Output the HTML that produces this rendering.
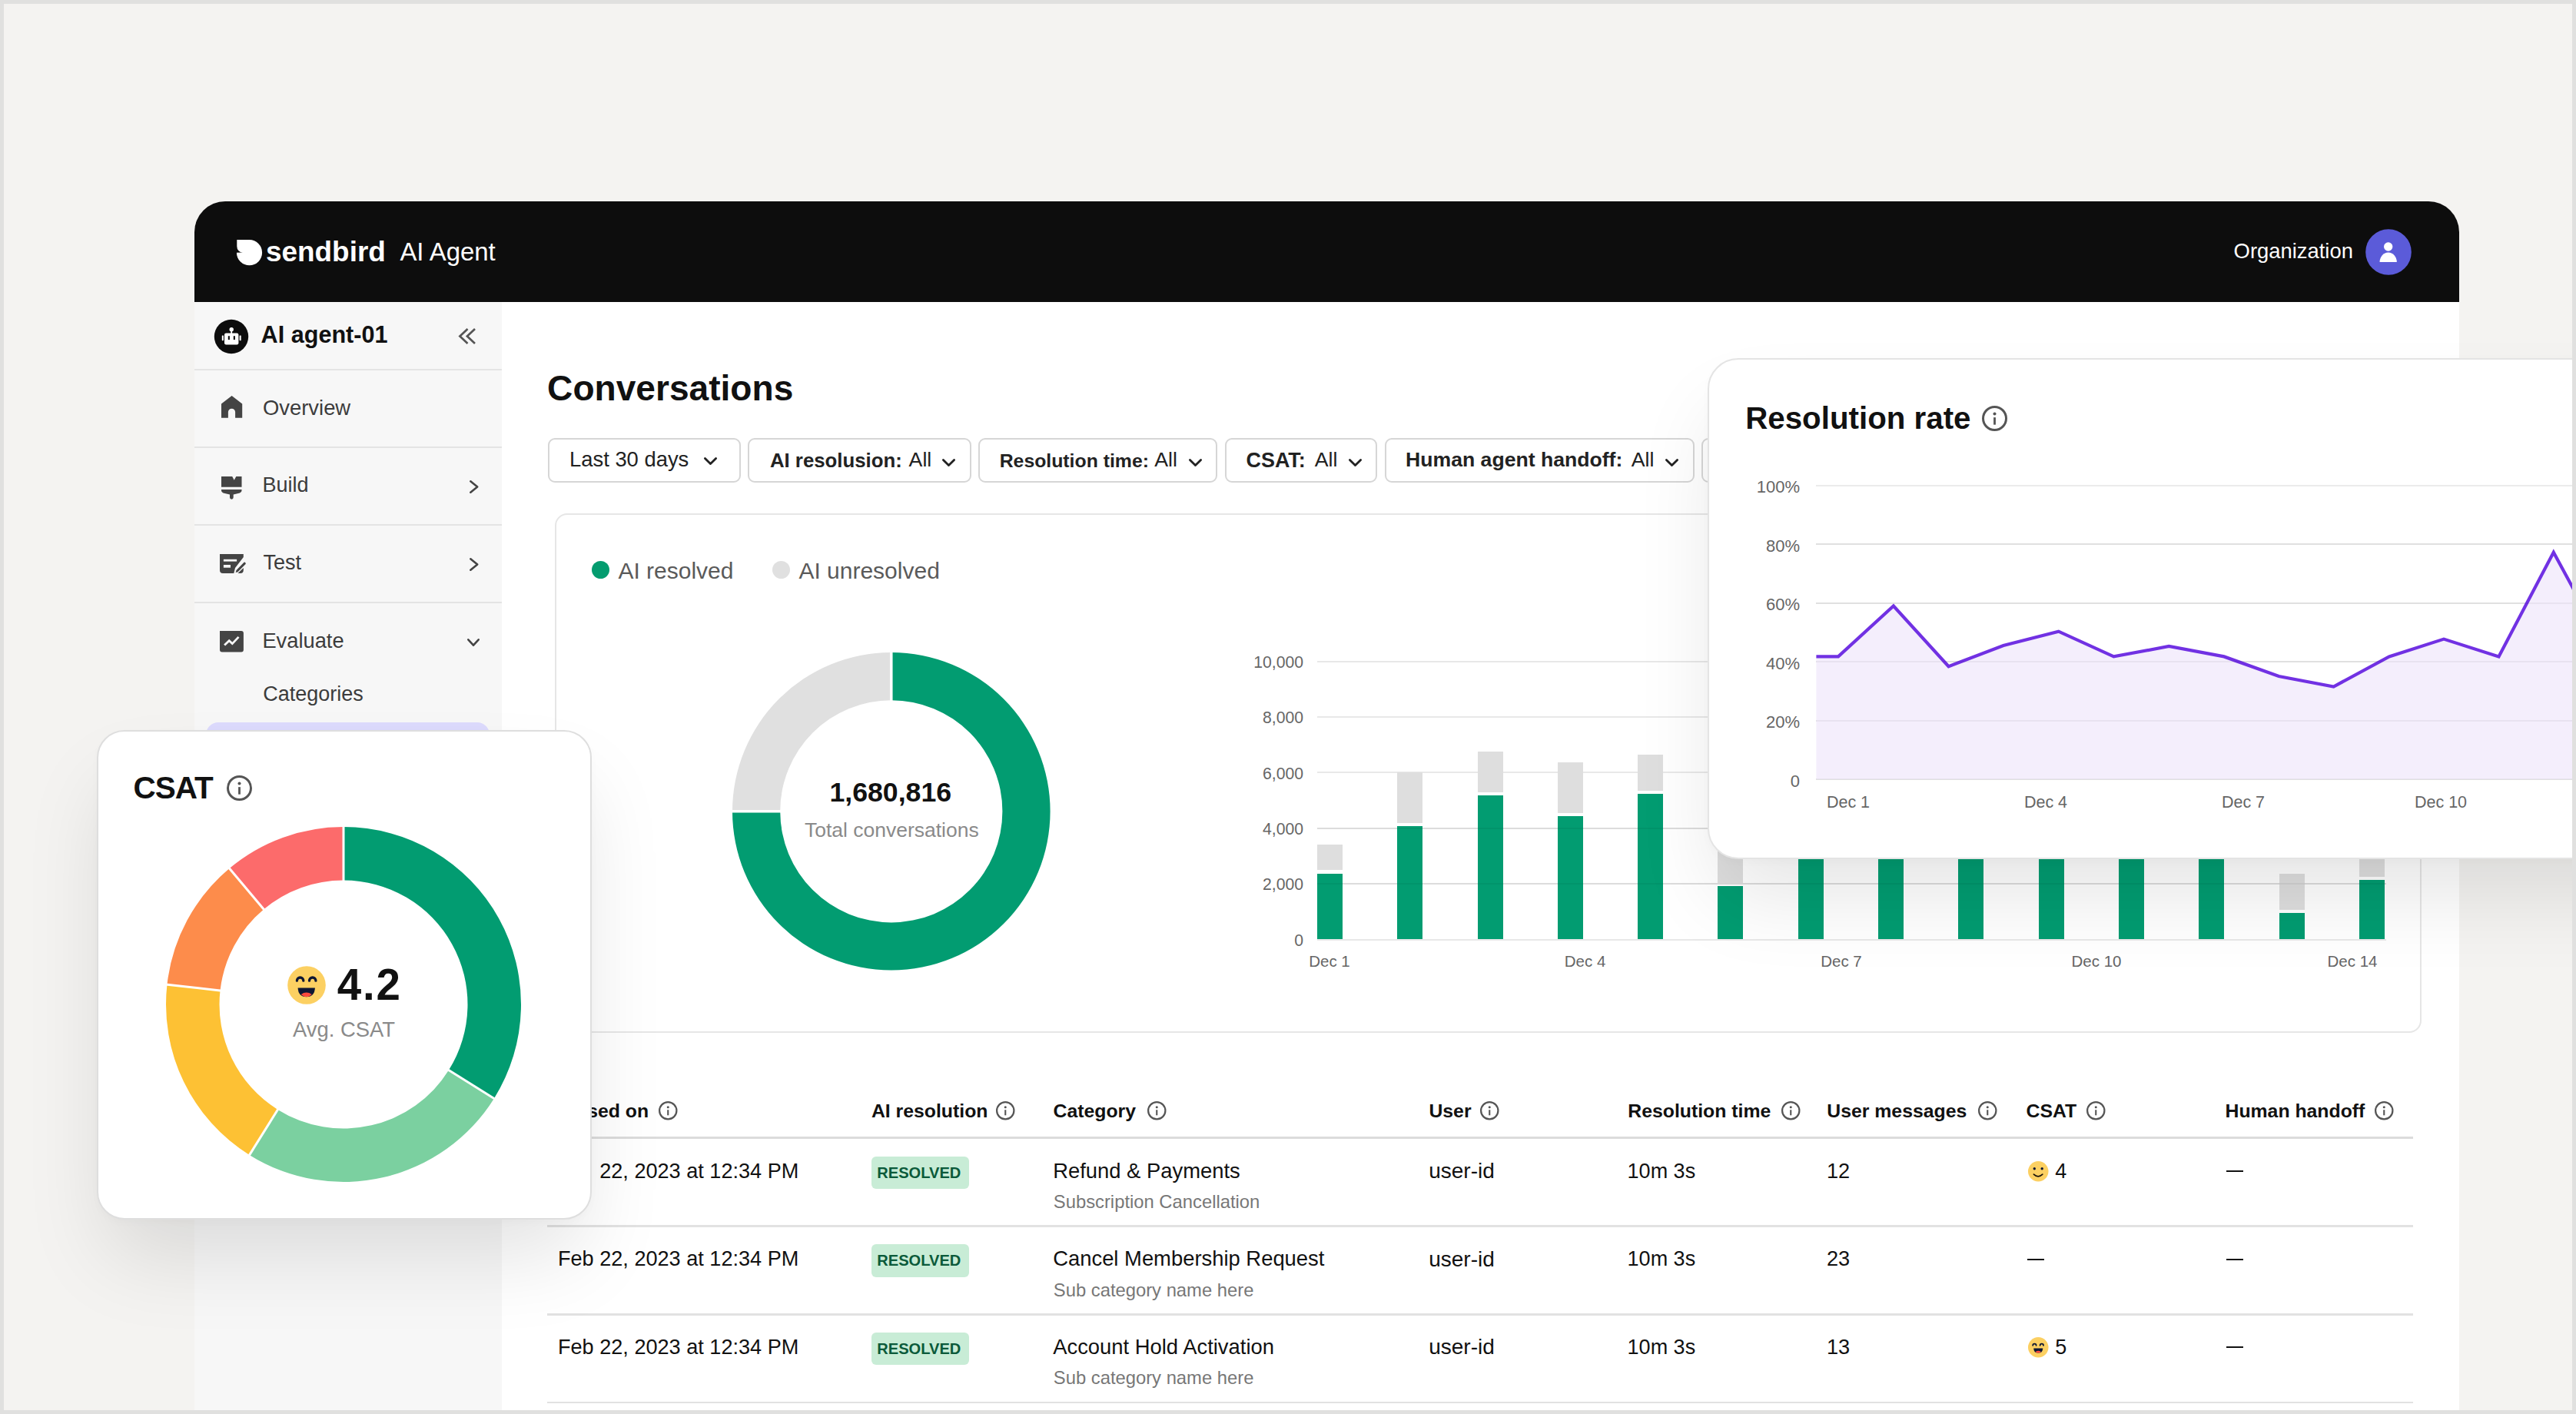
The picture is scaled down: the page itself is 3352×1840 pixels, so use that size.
<!DOCTYPE html><html><head><meta charset="utf-8"><style>
html,body{margin:0;padding:0}
body{width:3352px;height:1840px;overflow:hidden;position:relative;background:#f4f3f1;font-family:"Liberation Sans", sans-serif}
.t{position:absolute;white-space:nowrap}
svg{overflow:visible}
</style></head><body>
<div style="position:absolute;left:253.0px;top:393.0px;width:2947.0px;height:1447.0px;background:#fff"></div>
<div style="position:absolute;left:253.0px;top:262.0px;width:2947.0px;height:131.0px;background:#0d0d0d;border-radius:40px 40px 0 0"></div>
<div style="position:absolute;left:253.0px;top:393.0px;width:400.0px;height:1447.0px;background:#f7f7f7"></div>
<div style="position:absolute;left:253.0px;top:480.0px;width:400.0px;height:2.0px;background:#e4e4e4"></div>
<div style="position:absolute;left:253.0px;top:581.0px;width:400.0px;height:2.0px;background:#e4e4e4"></div>
<div style="position:absolute;left:253.0px;top:682.0px;width:400.0px;height:2.0px;background:#e4e4e4"></div>
<div style="position:absolute;left:253.0px;top:783.0px;width:400.0px;height:2.0px;background:#e4e4e4"></div>
<svg style="position:absolute;left:300.0px;top:300.0px;" width="60" height="60" viewBox="0 0 60 60"><path d="M8.3,12.1 H24.5 A16.6,16.6 0 1 1 7.9,28.8 L15.8,28.6 A7.6,7.9 0 0 1 8.3,20.6 Z" fill="#fff"/></svg>
<div class="t" style="left:346.0px;top:307.1px;font-size:36.9px;line-height:41.22px;font-weight:700;color:#fff;">sendbird</div>
<div class="t" style="left:520.4px;top:310.4px;font-size:32.9px;line-height:36.75px;font-weight:400;color:#fff;">AI Agent</div>
<div class="t" style="left:2906.6px;top:312.2px;font-size:27.4px;line-height:30.61px;font-weight:400;color:#fff;">Organization</div>
<svg style="position:absolute;left:3078.2px;top:298.0px;" width="60" height="60" viewBox="0 0 60 60"><circle cx="30" cy="30" r="29.8" fill="#5b5bd9"/><circle cx="29.7" cy="23" r="5.7" fill="#fff"/><path d="M18.6,42.9 A11.1,12.4 0 0 1 40.8,42.9 Z" fill="#fff"/></svg>
<svg style="position:absolute;left:279.4px;top:415.5px;" width="44" height="44" viewBox="0 0 44 44"><circle cx="22" cy="22" r="22.2" fill="#0d0d0d"/><rect x="13" y="17.4" width="18.4" height="15.1" rx="2.2" fill="#fff"/><rect x="17.8" y="21.2" width="2.1" height="4.9" fill="#0d0d0d"/><rect x="24.8" y="21.2" width="2.1" height="4.9" fill="#0d0d0d"/><rect x="9.8" y="20.4" width="2.1" height="6.8" rx="0.6" fill="#fff"/><rect x="32.6" y="20.4" width="2.1" height="6.8" rx="0.6" fill="#fff"/><circle cx="22.2" cy="12.7" r="2.7" fill="#fff"/><rect x="21.3" y="13" width="1.8" height="5" fill="#fff"/></svg>
<div class="t" style="left:339.6px;top:418.3px;font-size:30.6px;line-height:34.18px;font-weight:700;color:#111;">AI agent-01</div>
<svg style="position:absolute;left:597.0px;top:428.0px;" width="22" height="20" viewBox="0 0 22 20"><polyline points="10.5,1 1.4,9.5 10.5,18" fill="none" stroke="#555" stroke-width="2.7" stroke-linecap="square"/><polyline points="20,1 10.9,9.5 20,18" fill="none" stroke="#555" stroke-width="2.7" stroke-linecap="square"/></svg>
<svg style="position:absolute;left:287.9px;top:515.0px;" width="28" height="29" viewBox="0 0 28 29"><path d="M0,10.4 L13.6,0 L27.2,10.4 V28.8 H18.1 V21.3 A4.6,4.6 0 0 0 8.9,21.3 V28.8 H0 Z" fill="#444"/></svg>
<div class="t" style="left:342.0px;top:516.4px;font-size:27.4px;line-height:30.61px;font-weight:400;color:#3c3c3c;">Overview</div>
<svg style="position:absolute;left:288.2px;top:619.8px;" width="27" height="29" viewBox="0 0 27 29"><path d="M0,0 H14.2 L16.7,4.7 L19.3,0 H26.5 V13.7 H0 Z" fill="#444"/><path d="M0,17 H26.5 V18 Q26.5,21 22,22 L15.7,23.6 V27.3 A2.35,2.35 0 0 1 11,27.3 V23.6 L4.5,22 Q0,21 0,18 Z" fill="#444"/></svg>
<div class="t" style="left:341.4px;top:616.4px;font-size:27px;line-height:30.16px;font-weight:400;color:#3c3c3c;">Build</div>
<svg style="position:absolute;left:610.5px;top:624.5px;" width="11.5" height="17" viewBox="0 0 11.5 17"><polyline points="1.3,1.3 10.2,8.5 1.3,15.7" fill="none" stroke="#444" stroke-width="2.6" stroke-linecap="round" stroke-linejoin="round"/></svg>
<svg style="position:absolute;left:286.0px;top:721.3px;" width="34" height="26" viewBox="0 0 34 26"><path d="M0,0 H30.8 V4 L20,18 L18.3,25.1 H4 A4,4 0 0 1 0,21.1 Z" fill="#444"/><rect x="4.9" y="6.8" width="17.2" height="2.8" fill="#f7f7f7"/><rect x="4.9" y="14" width="9.1" height="3.7" fill="#f7f7f7"/><path d="M21.5,21 L31.5,10.8 A1.6,1.6 0 0 1 33.6,13 L23.5,23.2 L20.6,24 Z" fill="#444"/><path d="M30.8,18 V21.1 A4,4 0 0 1 26.8,25.1 H23.5 Z" fill="#444"/></svg>
<div class="t" style="left:342.4px;top:717.3px;font-size:27px;line-height:30.16px;font-weight:400;color:#3c3c3c;">Test</div>
<svg style="position:absolute;left:610.5px;top:725.5px;" width="11.5" height="17" viewBox="0 0 11.5 17"><polyline points="1.3,1.3 10.2,8.5 1.3,15.7" fill="none" stroke="#444" stroke-width="2.6" stroke-linecap="round" stroke-linejoin="round"/></svg>
<svg style="position:absolute;left:286.1px;top:821.1px;" width="31" height="28" viewBox="0 0 31 28"><path d="M0,0 H27.9 A3,3 0 0 1 30.9,3 V24.6 A3,3 0 0 1 27.9,27.6 H3 A3,3 0 0 1 0,24.6 Z" fill="#444"/><polyline points="6.1,18.5 12.2,12.7 16.3,16.6 24.5,7.9" fill="none" stroke="#f7f7f7" stroke-width="2.8"/></svg>
<div class="t" style="left:341.4px;top:818.6px;font-size:27.3px;line-height:30.49px;font-weight:400;color:#3c3c3c;">Evaluate</div>
<svg style="position:absolute;left:608.0px;top:830.6px;" width="16" height="10" viewBox="0 0 16 10"><polyline points="1.3,1.3 8.0,8.7 14.7,1.3" fill="none" stroke="#444" stroke-width="2.6" stroke-linecap="round" stroke-linejoin="round"/></svg>
<div class="t" style="left:342.2px;top:888.2px;font-size:27.0px;line-height:30.16px;font-weight:400;color:#3c3c3c;">Categories</div>
<div style="position:absolute;left:268.3px;top:940.0px;width:369.2px;height:80.0px;background:#dcdafd;border-radius:16px"></div>
<div class="t" style="left:712.1px;top:479.8px;font-size:46.1px;line-height:51.49px;font-weight:700;color:#111;">Conversations</div>
<div style="position:absolute;left:713.0px;top:570.4px;width:251.0px;height:57.6px;box-sizing:border-box;border:2px solid #d6d6d6;border-radius:9px;background:#fff"></div>
<div style="position:absolute;left:972.8px;top:570.4px;width:291.2px;height:57.6px;box-sizing:border-box;border:2px solid #d6d6d6;border-radius:9px;background:#fff"></div>
<div style="position:absolute;left:1273.3px;top:570.4px;width:310.6px;height:57.6px;box-sizing:border-box;border:2px solid #d6d6d6;border-radius:9px;background:#fff"></div>
<div style="position:absolute;left:1593.6px;top:570.4px;width:198.7px;height:57.6px;box-sizing:border-box;border:2px solid #d6d6d6;border-radius:9px;background:#fff"></div>
<div style="position:absolute;left:1801.6px;top:570.4px;width:403.0px;height:57.6px;box-sizing:border-box;border:2px solid #d6d6d6;border-radius:9px;background:#fff"></div>
<div style="position:absolute;left:2214.0px;top:570.4px;width:186.0px;height:57.6px;box-sizing:border-box;border:2px solid #d6d6d6;border-radius:9px;background:#fff"></div>
<div class="t" style="left:741.0px;top:583.2px;font-size:27.4px;line-height:30.61px;font-weight:400;color:#222;">Last 30 days</div>
<svg style="position:absolute;left:916.0px;top:595.0px;" width="17" height="10" viewBox="0 0 17 10"><polyline points="1.4,1.4 8.5,8.6 15.6,1.4" fill="none" stroke="#222" stroke-width="2.8" stroke-linecap="round" stroke-linejoin="round"/></svg>
<div class="t" style="left:1001.9px;top:584.7px;font-size:25.8px;line-height:28.82px;font-weight:700;color:#222;">AI resolusion:</div>
<div class="t" style="left:1182.6px;top:583.8px;font-size:26.7px;line-height:29.82px;font-weight:400;color:#222;">All</div>
<svg style="position:absolute;left:1226.0px;top:597.0px;" width="17" height="10" viewBox="0 0 17 10"><polyline points="1.4,1.4 8.5,8.6 15.6,1.4" fill="none" stroke="#222" stroke-width="2.8" stroke-linecap="round" stroke-linejoin="round"/></svg>
<div class="t" style="left:1300.7px;top:585.6px;font-size:24.8px;line-height:27.70px;font-weight:700;color:#222;">Resolution time:</div>
<div class="t" style="left:1502.3px;top:583.8px;font-size:26.7px;line-height:29.82px;font-weight:400;color:#222;">All</div>
<svg style="position:absolute;left:1547.0px;top:597.0px;" width="17" height="10" viewBox="0 0 17 10"><polyline points="1.4,1.4 8.5,8.6 15.6,1.4" fill="none" stroke="#222" stroke-width="2.8" stroke-linecap="round" stroke-linejoin="round"/></svg>
<div class="t" style="left:1621.6px;top:583.7px;font-size:26.9px;line-height:30.05px;font-weight:700;color:#222;">CSAT:</div>
<div class="t" style="left:1710.8px;top:583.8px;font-size:26.7px;line-height:29.82px;font-weight:400;color:#222;">All</div>
<svg style="position:absolute;left:1754.7px;top:597.0px;" width="17" height="10" viewBox="0 0 17 10"><polyline points="1.4,1.4 8.5,8.6 15.6,1.4" fill="none" stroke="#222" stroke-width="2.8" stroke-linecap="round" stroke-linejoin="round"/></svg>
<div class="t" style="left:1829.1px;top:583.9px;font-size:26.6px;line-height:29.71px;font-weight:700;color:#222;">Human agent handoff:</div>
<div class="t" style="left:2122.7px;top:583.8px;font-size:26.7px;line-height:29.82px;font-weight:400;color:#222;">All</div>
<svg style="position:absolute;left:2167.0px;top:597.0px;" width="17" height="10" viewBox="0 0 17 10"><polyline points="1.4,1.4 8.5,8.6 15.6,1.4" fill="none" stroke="#222" stroke-width="2.8" stroke-linecap="round" stroke-linejoin="round"/></svg>
<div style="position:absolute;left:722.0px;top:668.0px;width:2429.0px;height:676.0px;box-sizing:border-box;border:2px solid #e6e6e6;border-radius:16px;background:#fff"></div>
<div style="position:absolute;left:770.3px;top:730.4px;width:23.0px;height:23.0px;background:#049c6f;border-radius:50%"></div>
<div class="t" style="left:804.4px;top:725.9px;font-size:30.0px;line-height:33.51px;font-weight:400;color:#5a5a5a;">AI resolved</div>
<div style="position:absolute;left:1005.0px;top:730.4px;width:23.0px;height:23.0px;background:#e0e0e0;border-radius:50%"></div>
<div class="t" style="left:1039.4px;top:725.9px;font-size:30.0px;line-height:33.51px;font-weight:400;color:#5a5a5a;">AI unresolved</div>
<svg style="position:absolute;left:948.5px;top:845.0px;" width="421.6" height="421.6" viewBox="0 0 421.6 421.6"><path d="M210.80,4.00 A206.8,206.8 0 1 1 4.00,210.80 L66.20,210.80 A144.6,144.6 0 1 0 210.80,66.20 Z" fill="#029c71"/><path d="M4.00,210.80 A206.8,206.8 0 0 1 210.80,4.00 L210.80,66.20 A144.6,144.6 0 0 0 66.20,210.80 Z" fill="#e0e0e0"/><line x1="210.80" y1="68.20" x2="210.80" y2="2.00" stroke="#fff" stroke-width="3.5"/><line x1="68.20" y1="210.80" x2="2.00" y2="210.80" stroke="#fff" stroke-width="3.5"/></svg>
<div class="t" style="left:1079.4px;top:1011.7px;font-size:35.7px;line-height:39.88px;font-weight:700;color:#111;">1,680,816</div>
<div class="t" style="left:1046.9px;top:1066.0px;font-size:26.5px;line-height:29.60px;font-weight:400;color:#8a8a8a;">Total conversations</div>
<div style="position:absolute;left:1714.0px;top:859.7px;width:1391.0px;height:2.0px;background:#e8e8e8"></div>
<div class="t" style="left:1696.0px;top:849.8px;font-size:21.2px;line-height:23.68px;font-weight:400;color:#666;transform:translateX(-100%);">10,000</div>
<div style="position:absolute;left:1714.0px;top:932.1px;width:1391.0px;height:2.0px;background:#e8e8e8"></div>
<div class="t" style="left:1696.0px;top:922.2px;font-size:21.2px;line-height:23.68px;font-weight:400;color:#666;transform:translateX(-100%);">8,000</div>
<div style="position:absolute;left:1714.0px;top:1004.4px;width:1391.0px;height:2.0px;background:#e8e8e8"></div>
<div class="t" style="left:1696.0px;top:994.5px;font-size:21.2px;line-height:23.68px;font-weight:400;color:#666;transform:translateX(-100%);">6,000</div>
<div style="position:absolute;left:1714.0px;top:1076.8px;width:1391.0px;height:2.0px;background:#e8e8e8"></div>
<div class="t" style="left:1696.0px;top:1066.9px;font-size:21.2px;line-height:23.68px;font-weight:400;color:#666;transform:translateX(-100%);">4,000</div>
<div style="position:absolute;left:1714.0px;top:1149.1px;width:1391.0px;height:2.0px;background:#e8e8e8"></div>
<div class="t" style="left:1696.0px;top:1139.2px;font-size:21.2px;line-height:23.68px;font-weight:400;color:#666;transform:translateX(-100%);">2,000</div>
<div style="position:absolute;left:1714.0px;top:1221.5px;width:1391.0px;height:2.0px;background:#e8e8e8"></div>
<div class="t" style="left:1696.0px;top:1211.6px;font-size:21.2px;line-height:23.68px;font-weight:400;color:#666;transform:translateX(-100%);">0</div>
<div style="position:absolute;left:1713.9px;top:1099.4px;width:33.0px;height:33.1px;background:#dedede"></div>
<div style="position:absolute;left:1713.9px;top:1136.5px;width:33.0px;height:85.9px;background:#029c71"></div>
<div style="position:absolute;left:1818.2px;top:1004.5px;width:33.0px;height:66.2px;background:#dedede"></div>
<div style="position:absolute;left:1818.2px;top:1074.7px;width:33.0px;height:147.7px;background:#029c71"></div>
<div style="position:absolute;left:1922.5px;top:977.8px;width:33.0px;height:53.6px;background:#dedede"></div>
<div style="position:absolute;left:1922.5px;top:1035.4px;width:33.0px;height:187.0px;background:#029c71"></div>
<div style="position:absolute;left:2026.8px;top:992.0px;width:33.0px;height:66.0px;background:#dedede"></div>
<div style="position:absolute;left:2026.8px;top:1062.0px;width:33.0px;height:160.4px;background:#029c71"></div>
<div style="position:absolute;left:2131.1px;top:981.7px;width:33.0px;height:47.7px;background:#dedede"></div>
<div style="position:absolute;left:2131.1px;top:1033.4px;width:33.0px;height:189.0px;background:#029c71"></div>
<div style="position:absolute;left:2235.4px;top:1050.0px;width:33.0px;height:99.0px;background:#dedede"></div>
<div style="position:absolute;left:2235.4px;top:1153.0px;width:33.0px;height:69.4px;background:#029c71"></div>
<div style="position:absolute;left:2339.7px;top:950.0px;width:33.0px;height:46.0px;background:#dedede"></div>
<div style="position:absolute;left:2339.7px;top:1000.0px;width:33.0px;height:222.4px;background:#029c71"></div>
<div style="position:absolute;left:2444.0px;top:950.0px;width:33.0px;height:46.0px;background:#dedede"></div>
<div style="position:absolute;left:2444.0px;top:1000.0px;width:33.0px;height:222.4px;background:#029c71"></div>
<div style="position:absolute;left:2548.3px;top:950.0px;width:33.0px;height:46.0px;background:#dedede"></div>
<div style="position:absolute;left:2548.3px;top:1000.0px;width:33.0px;height:222.4px;background:#029c71"></div>
<div style="position:absolute;left:2652.6px;top:950.0px;width:33.0px;height:46.0px;background:#dedede"></div>
<div style="position:absolute;left:2652.6px;top:1000.0px;width:33.0px;height:222.4px;background:#029c71"></div>
<div style="position:absolute;left:2756.9px;top:950.0px;width:33.0px;height:46.0px;background:#dedede"></div>
<div style="position:absolute;left:2756.9px;top:1000.0px;width:33.0px;height:222.4px;background:#029c71"></div>
<div style="position:absolute;left:2861.2px;top:950.0px;width:33.0px;height:46.0px;background:#dedede"></div>
<div style="position:absolute;left:2861.2px;top:1000.0px;width:33.0px;height:222.4px;background:#029c71"></div>
<div style="position:absolute;left:2965.5px;top:1136.7px;width:33.0px;height:47.6px;background:#dedede"></div>
<div style="position:absolute;left:2965.5px;top:1188.3px;width:33.0px;height:34.1px;background:#029c71"></div>
<div style="position:absolute;left:3069.8px;top:1100.0px;width:33.0px;height:41.2px;background:#dedede"></div>
<div style="position:absolute;left:3069.8px;top:1145.2px;width:33.0px;height:77.2px;background:#029c71"></div>
<div style="position:absolute;left:1714.0px;top:1076.8px;width:1391.0px;height:2.0px;background:rgba(0,0,0,0.05)"></div>
<div style="position:absolute;left:1714.0px;top:1149.1px;width:1391.0px;height:2.0px;background:rgba(0,0,0,0.05)"></div>
<div class="t" style="left:1730.0px;top:1239.7px;font-size:20.5px;line-height:22.90px;font-weight:400;color:#666;transform:translateX(-50%);">Dec 1</div>
<div class="t" style="left:2062.6px;top:1239.7px;font-size:20.5px;line-height:22.90px;font-weight:400;color:#666;transform:translateX(-50%);">Dec 4</div>
<div class="t" style="left:2396.0px;top:1239.7px;font-size:20.5px;line-height:22.90px;font-weight:400;color:#666;transform:translateX(-50%);">Dec 7</div>
<div class="t" style="left:2728.0px;top:1239.7px;font-size:20.5px;line-height:22.90px;font-weight:400;color:#666;transform:translateX(-50%);">Dec 10</div>
<div class="t" style="left:3061.0px;top:1239.7px;font-size:20.5px;line-height:22.90px;font-weight:400;color:#666;transform:translateX(-50%);">Dec 14</div>
<div class="t" style="left:844.1px;top:1432.1px;font-size:24.8px;line-height:27.70px;font-weight:700;color:#111;transform:translateX(-100%);">Closed on</div>
<svg style="position:absolute;left:857.2px;top:1433.2px;" width="24.5" height="24.5" viewBox="0 0 24.5 24.5"><circle cx="12.25" cy="12.25" r="11.15" fill="none" stroke="#555" stroke-width="2.2"/><circle cx="12.25" cy="7.7823529411764705" r="1.513235294117647" fill="#555"/><rect x="11.20514705882353" y="11.241176470588236" width="2.0897058823529413" height="7.061764705882354" fill="#555"/></svg>
<div class="t" style="left:1133.9px;top:1432.1px;font-size:24.8px;line-height:27.70px;font-weight:700;color:#111;">AI resolution</div>
<svg style="position:absolute;left:1296.3px;top:1433.2px;" width="24.5" height="24.5" viewBox="0 0 24.5 24.5"><circle cx="12.25" cy="12.25" r="11.15" fill="none" stroke="#555" stroke-width="2.2"/><circle cx="12.25" cy="7.7823529411764705" r="1.513235294117647" fill="#555"/><rect x="11.20514705882353" y="11.241176470588236" width="2.0897058823529413" height="7.061764705882354" fill="#555"/></svg>
<div class="t" style="left:1370.5px;top:1432.1px;font-size:24.8px;line-height:27.70px;font-weight:700;color:#111;">Category</div>
<svg style="position:absolute;left:1493.0px;top:1433.2px;" width="24.5" height="24.5" viewBox="0 0 24.5 24.5"><circle cx="12.25" cy="12.25" r="11.15" fill="none" stroke="#555" stroke-width="2.2"/><circle cx="12.25" cy="7.7823529411764705" r="1.513235294117647" fill="#555"/><rect x="11.20514705882353" y="11.241176470588236" width="2.0897058823529413" height="7.061764705882354" fill="#555"/></svg>
<div class="t" style="left:1859.4px;top:1432.1px;font-size:24.8px;line-height:27.70px;font-weight:700;color:#111;">User</div>
<svg style="position:absolute;left:1925.8px;top:1433.2px;" width="24.5" height="24.5" viewBox="0 0 24.5 24.5"><circle cx="12.25" cy="12.25" r="11.15" fill="none" stroke="#555" stroke-width="2.2"/><circle cx="12.25" cy="7.7823529411764705" r="1.513235294117647" fill="#555"/><rect x="11.20514705882353" y="11.241176470588236" width="2.0897058823529413" height="7.061764705882354" fill="#555"/></svg>
<div class="t" style="left:2118.3px;top:1432.1px;font-size:24.8px;line-height:27.70px;font-weight:700;color:#111;">Resolution time</div>
<svg style="position:absolute;left:2317.8px;top:1433.2px;" width="24.5" height="24.5" viewBox="0 0 24.5 24.5"><circle cx="12.25" cy="12.25" r="11.15" fill="none" stroke="#555" stroke-width="2.2"/><circle cx="12.25" cy="7.7823529411764705" r="1.513235294117647" fill="#555"/><rect x="11.20514705882353" y="11.241176470588236" width="2.0897058823529413" height="7.061764705882354" fill="#555"/></svg>
<div class="t" style="left:2377.3px;top:1432.1px;font-size:24.8px;line-height:27.70px;font-weight:700;color:#111;">User messages</div>
<svg style="position:absolute;left:2574.1px;top:1433.2px;" width="24.5" height="24.5" viewBox="0 0 24.5 24.5"><circle cx="12.25" cy="12.25" r="11.15" fill="none" stroke="#555" stroke-width="2.2"/><circle cx="12.25" cy="7.7823529411764705" r="1.513235294117647" fill="#555"/><rect x="11.20514705882353" y="11.241176470588236" width="2.0897058823529413" height="7.061764705882354" fill="#555"/></svg>
<div class="t" style="left:2636.5px;top:1432.1px;font-size:24.8px;line-height:27.70px;font-weight:700;color:#111;">CSAT</div>
<svg style="position:absolute;left:2715.4px;top:1433.2px;" width="24.5" height="24.5" viewBox="0 0 24.5 24.5"><circle cx="12.25" cy="12.25" r="11.15" fill="none" stroke="#555" stroke-width="2.2"/><circle cx="12.25" cy="7.7823529411764705" r="1.513235294117647" fill="#555"/><rect x="11.20514705882353" y="11.241176470588236" width="2.0897058823529413" height="7.061764705882354" fill="#555"/></svg>
<div class="t" style="left:2895.5px;top:1432.1px;font-size:24.8px;line-height:27.70px;font-weight:700;color:#111;">Human handoff</div>
<svg style="position:absolute;left:3090.2px;top:1433.2px;" width="24.5" height="24.5" viewBox="0 0 24.5 24.5"><circle cx="12.25" cy="12.25" r="11.15" fill="none" stroke="#555" stroke-width="2.2"/><circle cx="12.25" cy="7.7823529411764705" r="1.513235294117647" fill="#555"/><rect x="11.20514705882353" y="11.241176470588236" width="2.0897058823529413" height="7.061764705882354" fill="#555"/></svg>
<div style="position:absolute;left:712.0px;top:1478.5px;width:2428.0px;height:3.0px;background:#dcdcdc"></div>
<div style="position:absolute;left:712.0px;top:1594.0px;width:2428.0px;height:2.5px;background:#e2e2e2"></div>
<div style="position:absolute;left:712.0px;top:1709.0px;width:2428.0px;height:2.5px;background:#e2e2e2"></div>
<div style="position:absolute;left:712.0px;top:1823.5px;width:2428.0px;height:2.5px;background:#e2e2e2"></div>
<div style="position:absolute;left:776px;top:1493.3px;width:300px;height:60px;overflow:hidden">
<div class="t" style="left:-50.0px;top:15.5px;font-size:27.1px;line-height:30.27px;font-weight:400;color:#111;">Feb 22, 2023 at 12:34 PM</div>
</div>
<div style="position:absolute;left:1134.4px;top:1504.6px;width:126.6px;height:42.5px;background:#c8ecd6;border-radius:6px"></div>
<div class="t" style="left:1141.3px;top:1514.6px;font-size:20.1px;line-height:22.45px;font-weight:700;color:#0b5a3a;">RESOLVED</div>
<div class="t" style="left:1370.2px;top:1508.5px;font-size:27.4px;line-height:30.61px;font-weight:400;color:#111;">Refund &amp; Payments</div>
<div class="t" style="left:1370.8px;top:1551.2px;font-size:23.8px;line-height:26.58px;font-weight:400;color:#777;">Subscription Cancellation</div>
<div class="t" style="left:1859.2px;top:1508.0px;font-size:28.0px;line-height:31.28px;font-weight:400;color:#111;">user-id</div>
<div class="t" style="left:2117.6px;top:1508.9px;font-size:27.0px;line-height:30.16px;font-weight:400;color:#111;">10m 3s</div>
<div class="t" style="left:2377.0px;top:1508.7px;font-size:27.2px;line-height:30.38px;font-weight:400;color:#111;">12</div>
<svg style="position:absolute;left:2639.0px;top:1511.2px;" width="26.5" height="26.5" viewBox="0 0 26.5 26.5"><circle cx="13.25" cy="13.25" r="13.25" fill="#fcd062"/><circle cx="8.3" cy="9.8" r="1.7" fill="#0d1633"/><circle cx="18.2" cy="9.8" r="1.7" fill="#0d1633"/><path d="M7.4,17.2 Q13.1,22.6 18.8,17.2" fill="none" stroke="#1a1208" stroke-width="1.7" stroke-linecap="round"/></svg>
<div class="t" style="left:2674.2px;top:1508.9px;font-size:27px;line-height:30.16px;font-weight:400;color:#111;">4</div>
<div style="position:absolute;left:2897.0px;top:1523.0px;width:21.5px;height:2.0px;background:#111"></div>
<div class="t" style="left:726.0px;top:1623.3px;font-size:27.1px;line-height:30.27px;font-weight:400;color:#111;">Feb 22, 2023 at 12:34 PM</div>
<div style="position:absolute;left:1134.4px;top:1619.1px;width:126.6px;height:42.5px;background:#c8ecd6;border-radius:6px"></div>
<div class="t" style="left:1141.3px;top:1629.1px;font-size:20.1px;line-height:22.45px;font-weight:700;color:#0b5a3a;">RESOLVED</div>
<div class="t" style="left:1370.2px;top:1623.0px;font-size:27.4px;line-height:30.61px;font-weight:400;color:#111;">Cancel Membership Request</div>
<div class="t" style="left:1370.8px;top:1665.7px;font-size:23.8px;line-height:26.58px;font-weight:400;color:#777;">Sub category name here</div>
<div class="t" style="left:1859.2px;top:1622.5px;font-size:28.0px;line-height:31.28px;font-weight:400;color:#111;">user-id</div>
<div class="t" style="left:2117.6px;top:1623.4px;font-size:27.0px;line-height:30.16px;font-weight:400;color:#111;">10m 3s</div>
<div class="t" style="left:2377.0px;top:1623.2px;font-size:27.2px;line-height:30.38px;font-weight:400;color:#111;">23</div>
<div style="position:absolute;left:2638.0px;top:1638.0px;width:21.5px;height:2.0px;background:#111"></div>
<div style="position:absolute;left:2897.0px;top:1638.0px;width:21.5px;height:2.0px;background:#111"></div>
<div class="t" style="left:726.0px;top:1737.8px;font-size:27.1px;line-height:30.27px;font-weight:400;color:#111;">Feb 22, 2023 at 12:34 PM</div>
<div style="position:absolute;left:1134.4px;top:1733.6px;width:126.6px;height:42.5px;background:#c8ecd6;border-radius:6px"></div>
<div class="t" style="left:1141.3px;top:1743.6px;font-size:20.1px;line-height:22.45px;font-weight:700;color:#0b5a3a;">RESOLVED</div>
<div class="t" style="left:1370.2px;top:1737.5px;font-size:27.4px;line-height:30.61px;font-weight:400;color:#111;">Account Hold Activation</div>
<div class="t" style="left:1370.8px;top:1780.2px;font-size:23.8px;line-height:26.58px;font-weight:400;color:#777;">Sub category name here</div>
<div class="t" style="left:1859.2px;top:1737.0px;font-size:28.0px;line-height:31.28px;font-weight:400;color:#111;">user-id</div>
<div class="t" style="left:2117.6px;top:1737.9px;font-size:27.0px;line-height:30.16px;font-weight:400;color:#111;">10m 3s</div>
<div class="t" style="left:2377.0px;top:1737.7px;font-size:27.2px;line-height:30.38px;font-weight:400;color:#111;">13</div>
<svg style="position:absolute;left:2639.0px;top:1740.2px;" width="26.5" height="26.5" viewBox="0 0 26.5 26.5"><circle cx="13.25" cy="13.25" r="13.25" fill="#fcd062"/><path d="M6.2,10.8 A2.2,2.2 0 0 1 10.6,10.8" fill="none" stroke="#0d1633" stroke-width="1.8" stroke-linecap="round"/><path d="M15.6,10.8 A2.2,2.2 0 0 1 20,10.8" fill="none" stroke="#0d1633" stroke-width="1.8" stroke-linecap="round"/><path d="M7.2,14.4 H19.3 Q19,20.6 13.25,20.6 Q7.5,20.6 7.2,14.4 Z" fill="#0d1633"/><path d="M9.6,19 Q13.25,16.6 16.9,19 Q15.5,20.5 13.25,20.5 Q11,20.5 9.6,19 Z" fill="#fc4a3d"/></svg>
<div class="t" style="left:2674.2px;top:1737.9px;font-size:27px;line-height:30.16px;font-weight:400;color:#111;">5</div>
<div style="position:absolute;left:2897.0px;top:1752.0px;width:21.5px;height:2.0px;background:#111"></div>
<div style="position:absolute;left:125.7px;top:950.3px;width:644.1px;height:636.7px;box-sizing:border-box;border:2px solid #dedede;border-radius:36px;background:#fff;box-shadow:0 60px 110px -14px rgba(0,0,0,0.115),0 4px 12px rgba(0,0,0,0.02)"></div>
<div class="t" style="left:173.4px;top:1003.3px;font-size:40.5px;line-height:45.24px;font-weight:700;color:#111;letter-spacing:-1px;">CSAT</div>
<svg style="position:absolute;left:295.1px;top:1009.0px;" width="33" height="33" viewBox="0 0 33 33"><circle cx="16.5" cy="16.5" r="15.0" fill="none" stroke="#555" stroke-width="3"/><circle cx="16.5" cy="10.48235294117647" r="2.038235294117647" fill="#555"/><rect x="15.09264705882353" y="15.141176470588235" width="2.814705882352941" height="9.511764705882353" fill="#555"/></svg>
<svg style="position:absolute;left:212.0px;top:1072.0px;" width="470" height="470" viewBox="0 0 470 470"><path d="M235.00,4.00 A231,231 0 0 1 430.90,357.41 L371.96,320.58 A161.5,161.5 0 0 0 235.00,73.50 Z" fill="#029c71"/><path d="M430.90,357.41 A231,231 0 0 1 112.59,430.90 L149.42,371.96 A161.5,161.5 0 0 0 371.96,320.58 Z" fill="#7bd0a0"/><path d="M112.59,430.90 A231,231 0 0 1 5.44,209.25 L74.51,217.00 A161.5,161.5 0 0 0 149.42,371.96 Z" fill="#fdc134"/><path d="M5.44,209.25 A231,231 0 0 1 86.52,58.04 L131.19,111.28 A161.5,161.5 0 0 0 74.51,217.00 Z" fill="#fd8c4b"/><path d="M86.52,58.04 A231,231 0 0 1 235.00,4.00 L235.00,73.50 A161.5,161.5 0 0 0 131.19,111.28 Z" fill="#fc6b6b"/><line x1="235.00" y1="75.50" x2="235.00" y2="2.00" stroke="#fff" stroke-width="3"/><line x1="370.26" y1="319.52" x2="432.60" y2="358.47" stroke="#fff" stroke-width="3"/><line x1="150.48" y1="370.26" x2="111.53" y2="432.60" stroke="#fff" stroke-width="3"/><line x1="76.49" y1="217.22" x2="3.45" y2="209.03" stroke="#fff" stroke-width="3"/><line x1="132.48" y1="112.82" x2="85.23" y2="56.51" stroke="#fff" stroke-width="3"/></svg>
<svg style="position:absolute;left:374.4px;top:1256.5px;" width="50" height="50" viewBox="0 0 50 50"><circle cx="25" cy="25" r="24.8" fill="#fcd062"/><path d="M12.4,19.2 A4.2,4.2 0 0 1 20.8,19.2" fill="none" stroke="#0d1633" stroke-width="3.3" stroke-linecap="round"/><path d="M28.5,19.2 A4.2,4.2 0 0 1 36.9,19.2" fill="none" stroke="#0d1633" stroke-width="3.3" stroke-linecap="round"/><path d="M13.6,28.6 H35.9 Q35.4,40.2 24.75,40.2 Q14.1,40.2 13.6,28.6 Z" fill="#0d1633"/><path d="M17.8,37 Q24.75,32.2 31.7,37 Q29,40.1 24.75,40.1 Q20.5,40.1 17.8,37 Z" fill="#fc4a3d"/></svg>
<div class="t" style="left:438.8px;top:1249.9px;font-size:56.5px;line-height:63.11px;font-weight:700;color:#111;letter-spacing:1.8px;">4.2</div>
<div class="t" style="left:381.0px;top:1325.0px;font-size:27.4px;line-height:30.61px;font-weight:400;color:#8a8a8a;">Avg. CSAT</div>
<div style="position:absolute;left:2221.8px;top:466.0px;width:1300.0px;height:652.0px;box-sizing:border-box;border:2px solid #e4e4e4;border-radius:40px;background:#fff;box-shadow:0 60px 110px -14px rgba(0,0,0,0.105),0 4px 12px rgba(0,0,0,0.02)"></div>
<div class="t" style="left:2271.2px;top:522.3px;font-size:40.3px;line-height:45.02px;font-weight:700;color:#111;">Resolution rate</div>
<svg style="position:absolute;left:2578.5px;top:527.5px;" width="33" height="33" viewBox="0 0 33 33"><circle cx="16.5" cy="16.5" r="15.0" fill="none" stroke="#555" stroke-width="3"/><circle cx="16.5" cy="10.48235294117647" r="2.038235294117647" fill="#555"/><rect x="15.09264705882353" y="15.141176470588235" width="2.814705882352941" height="9.511764705882353" fill="#555"/></svg>
<div style="position:absolute;left:2363.4px;top:630.6px;width:1000.0px;height:2.0px;background:#ebebeb"></div>
<div class="t" style="left:2342.0px;top:622.2px;font-size:22px;line-height:24.57px;font-weight:400;color:#666;transform:translateX(-100%);">100%</div>
<div style="position:absolute;left:2363.4px;top:707.1px;width:1000.0px;height:2.0px;background:#ebebeb"></div>
<div class="t" style="left:2342.0px;top:698.7px;font-size:22px;line-height:24.57px;font-weight:400;color:#666;transform:translateX(-100%);">80%</div>
<div style="position:absolute;left:2363.4px;top:783.6px;width:1000.0px;height:2.0px;background:#ebebeb"></div>
<div class="t" style="left:2342.0px;top:775.2px;font-size:22px;line-height:24.57px;font-weight:400;color:#666;transform:translateX(-100%);">60%</div>
<div style="position:absolute;left:2363.4px;top:860.0px;width:1000.0px;height:2.0px;background:#ebebeb"></div>
<div class="t" style="left:2342.0px;top:851.6px;font-size:22px;line-height:24.57px;font-weight:400;color:#666;transform:translateX(-100%);">40%</div>
<div style="position:absolute;left:2363.4px;top:936.5px;width:1000.0px;height:2.0px;background:#ebebeb"></div>
<div class="t" style="left:2342.0px;top:928.1px;font-size:22px;line-height:24.57px;font-weight:400;color:#666;transform:translateX(-100%);">20%</div>
<div style="position:absolute;left:2363.4px;top:1013.0px;width:1000.0px;height:2.0px;background:#ebebeb"></div>
<div class="t" style="left:2342.0px;top:1004.6px;font-size:22px;line-height:24.57px;font-weight:400;color:#666;transform:translateX(-100%);">0</div>
<svg style="position:absolute;left:2300.0px;top:600.0px;" width="1100" height="450" viewBox="0 0 1100 450"><path d="M63.4,414 L63.4,254.4 L92.0,254.4 L163.9,188.5 L235.6,267.2 L306.9,240.0 L378.7,221.7 L450.5,254.4 L522.3,241.0 L594.0,254.4 L665.3,280.0 L736.6,293.5 L808.9,254.4 L880.0,231.6 L951.5,254.4 L1022.8,118.7 L1094.0,250.0 L1094.0,414 Z" fill="#f3edfc" fill-opacity="0.92"/><polyline points="63.4,254.4 92.0,254.4 163.9,188.5 235.6,267.2 306.9,240.0 378.7,221.7 450.5,254.4 522.3,241.0 594.0,254.4 665.3,280.0 736.6,293.5 808.9,254.4 880.0,231.6 951.5,254.4 1022.8,118.7 1094.0,250.0" fill="none" stroke="#7131e3" stroke-width="4.2" stroke-linejoin="miter"/></svg>
<div style="position:absolute;left:2363.4px;top:707.1px;width:1000.0px;height:2.0px;background:rgba(0,0,0,0.045)"></div>
<div style="position:absolute;left:2363.4px;top:783.6px;width:1000.0px;height:2.0px;background:rgba(0,0,0,0.045)"></div>
<div style="position:absolute;left:2363.4px;top:860.0px;width:1000.0px;height:2.0px;background:rgba(0,0,0,0.045)"></div>
<div style="position:absolute;left:2363.4px;top:936.5px;width:1000.0px;height:2.0px;background:rgba(0,0,0,0.045)"></div>
<div style="position:absolute;left:2363.4px;top:1013.0px;width:1000.0px;height:2.0px;background:rgba(0,0,0,0.045)"></div>
<div class="t" style="left:2405.0px;top:1032.0px;font-size:21.5px;line-height:24.02px;font-weight:400;color:#666;transform:translateX(-50%);">Dec 1</div>
<div class="t" style="left:2662.0px;top:1032.0px;font-size:21.5px;line-height:24.02px;font-weight:400;color:#666;transform:translateX(-50%);">Dec 4</div>
<div class="t" style="left:2919.0px;top:1032.0px;font-size:21.5px;line-height:24.02px;font-weight:400;color:#666;transform:translateX(-50%);">Dec 7</div>
<div class="t" style="left:3176.0px;top:1032.0px;font-size:21.5px;line-height:24.02px;font-weight:400;color:#666;transform:translateX(-50%);">Dec 10</div>
<div style="position:absolute;left:0;top:0;width:3352px;height:1840px;box-sizing:border-box;border:5px solid #e0e0df;pointer-events:none"></div>
</body></html>
